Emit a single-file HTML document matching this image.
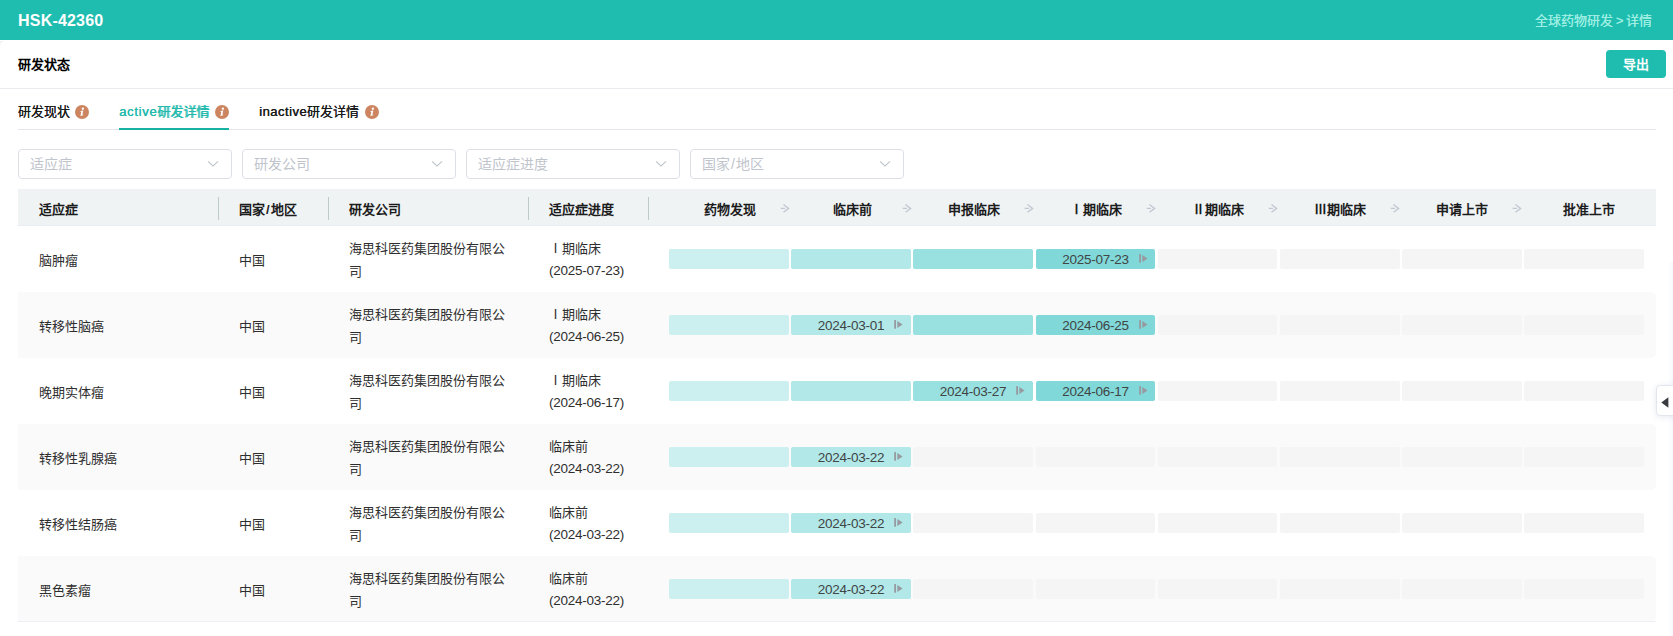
<!DOCTYPE html>
<html lang="zh-CN">
<head>
<meta charset="utf-8">
<title>HSK-42360</title>
<style>
*{box-sizing:border-box}
html,body{margin:0;padding:0}
body{width:1673px;height:636px;position:relative;overflow:hidden;background:#fff;font-family:"Liberation Sans",sans-serif;font-size:13px;color:#333}
.abs{position:absolute}
.top{left:0;top:0;width:1673px;height:40px;background:#1fbdaf}
.title{left:18px;top:1px;height:40px;line-height:40px;font-size:16px;font-weight:bold;color:#fff;white-space:nowrap;letter-spacing:.2px}
.crumb{right:21px;top:1px;height:40px;line-height:40px;font-size:13px;color:#9deee2;text-shadow:.2px 0 0 #9deee2;white-space:nowrap}
.crumb i{font-style:normal;letter-spacing:-1px;margin-right:1px}
.sec{left:18px;top:53px;height:24px;line-height:24px;font-size:13px;font-weight:bold;color:#000;white-space:nowrap}
.btn{left:1606px;top:50px;width:60px;height:28px;border-radius:4px;background:#1fbdaf;color:#fff;font-weight:bold;font-size:13px;line-height:28px;padding-top:1px;text-align:center}
.hr1{left:0;top:88px;width:1673px;height:1px;background:#e9ebef}
.corner{left:0;top:41px;width:4px;height:4px;background:radial-gradient(circle at 4px 4px,#fff 3.4px,#f1f1f1 4px)}
.tabline{left:18px;top:129px;width:1638px;height:1px;background:#e4e7ed}
.tab{top:100px;height:24px;line-height:24px;font-size:13px;font-weight:400;color:#1a1a1a;text-shadow:.4px 0 0 #1a1a1a;white-space:nowrap}
.lat{letter-spacing:.75px}
.sl{font-weight:inherit;margin:0 1px}
.d{font-size:13.5px;letter-spacing:-.26px;position:relative;top:-1px}
.tab.on{color:#1fbaad;text-shadow:.4px 0 0 #1fbaad}
.ink{left:119px;top:128px;width:110px;height:2px;background:#16b3a4}
.info{width:14px;height:14px;top:105px}
.sel{top:149px;width:214px;height:30px;border:1px solid #dcdfe6;border-radius:4px;background:#fff}
.sel span{position:absolute;left:11px;top:0;height:28px;line-height:28px;font-size:14px;color:#c0c4cc;white-space:nowrap}
.sel svg{position:absolute;left:188px;top:10px}
.thead{left:18px;top:189px;width:1638px;height:37px;background:#eff3f4;border-bottom:1px solid #e9ecf2}
.th{top:191px;height:37px;line-height:37px;font-weight:bold;color:#1c1c1c;font-size:13px;white-space:nowrap}
.sep{top:197px;width:1px;height:23px;background:#bccbc8}
.row{left:18px;width:1638px;height:66px}
.row.alt{background:#fafafa;border-radius:0 5px 5px 0}
.c{position:absolute;line-height:23px;font-size:13px;color:#2e2e2e;white-space:nowrap}
.c1{left:21px;top:23px}
.c2{left:221px;top:23px}
.c3{left:331px;top:11px;width:158px;white-space:normal}
.c4{left:531px;top:11px}
.bar{position:absolute;top:23px;height:20px;border-radius:2px;background:#f5f5f5;text-align:center;line-height:21px;font-size:13.5px;letter-spacing:-.26px;color:#404545}
.b1{background:#ccefef !important}
.b2{background:#b2e8e8 !important}
.b3{background:#99e0e0 !important}
.b4{background:#80d8d8 !important}
.bar svg{position:absolute;left:102.8px;top:5px}
.sth{top:191px;height:37px;line-height:37px;font-weight:bold;color:#1c1c1c;font-size:13px;text-align:center;white-space:nowrap}
.arr{top:204px}
.endline{left:18px;top:621px;width:1638px;height:1px;background:#ebeef5}
.side{left:1656px;top:385px;width:20px;height:31px;background:#fff;border:1px solid #e3e6ec;border-radius:4px 0 0 4px;box-shadow:0 1px 6px rgba(40,70,130,.12)}
.edge{left:1668px;top:262px;width:5px;height:374px;background:linear-gradient(90deg,rgba(120,150,220,0),rgba(120,150,220,.07))}
</style>
</head>
<body>
<div class="abs top"></div>
<div class="abs title">HSK-42360</div>
<div class="abs crumb">全球药物研发<i> &gt; </i>详情</div>
<div class="abs sec">研发状态</div>
<div class="abs btn">导出</div>
<div class="abs hr1"></div>
<div class="abs corner"></div>
<div class="abs tab" style="left:18px">研发现状</div>
<svg class="abs info" style="left:75px" viewBox="0 0 14 14"><circle cx="7" cy="7" r="7" fill="#cd8561"/><circle cx="7.85" cy="3.75" r="1.15" fill="#fff"/><path d="M5.5 6 L8.3 5.5 L7.35 9.7 L8.3 9.5 L8.15 10.3 L5.4 10.9 L6.35 6.7 L5.4 6.85 Z" fill="#fff"/></svg>
<div class="abs tab on" style="left:119px"><span class="lat" style="letter-spacing:.7px">active</span>研发详情</div>
<svg class="abs info" style="left:215px" viewBox="0 0 14 14"><circle cx="7" cy="7" r="7" fill="#cd8561"/><circle cx="7.85" cy="3.75" r="1.15" fill="#fff"/><path d="M5.5 6 L8.3 5.5 L7.35 9.7 L8.3 9.5 L8.15 10.3 L5.4 10.9 L6.35 6.7 L5.4 6.85 Z" fill="#fff"/></svg>
<div class="abs tab" style="left:259px"><span class="lat" style="letter-spacing:.5px">inactive</span>研发详情</div>
<svg class="abs info" style="left:365px" viewBox="0 0 14 14"><circle cx="7" cy="7" r="7" fill="#cd8561"/><circle cx="7.85" cy="3.75" r="1.15" fill="#fff"/><path d="M5.5 6 L8.3 5.5 L7.35 9.7 L8.3 9.5 L8.15 10.3 L5.4 10.9 L6.35 6.7 L5.4 6.85 Z" fill="#fff"/></svg>
<div class="abs tabline"></div>
<div class="abs ink"></div>
<div class="abs sel" style="left:18px"><span>适应症</span><svg width="12" height="8" viewBox="0 0 12 8"><path d="M1 1.3 L6 6 L11 1.3" fill="none" stroke="#c0c4cc" stroke-width="1.1"/></svg></div>
<div class="abs sel" style="left:242px"><span>研发公司</span><svg width="12" height="8" viewBox="0 0 12 8"><path d="M1 1.3 L6 6 L11 1.3" fill="none" stroke="#c0c4cc" stroke-width="1.1"/></svg></div>
<div class="abs sel" style="left:466px"><span>适应症进度</span><svg width="12" height="8" viewBox="0 0 12 8"><path d="M1 1.3 L6 6 L11 1.3" fill="none" stroke="#c0c4cc" stroke-width="1.1"/></svg></div>
<div class="abs sel" style="left:690px"><span>国家<b class="sl">/</b>地区</span><svg width="12" height="8" viewBox="0 0 12 8"><path d="M1 1.3 L6 6 L11 1.3" fill="none" stroke="#c0c4cc" stroke-width="1.1"/></svg></div>
<div class="abs thead"></div>
<div class="abs th" style="left:39px">适应症</div>
<div class="abs th" style="left:239px">国家<b class="sl">/</b>地区</div>
<div class="abs th" style="left:349px">研发公司</div>
<div class="abs th" style="left:549px">适应症进度</div>
<div class="abs sep" style="left:218px"></div>
<div class="abs sep" style="left:328px"></div>
<div class="abs sep" style="left:528px"></div>
<div class="abs sep" style="left:648px"></div>
<div class="abs sth" style="left:680.25px;width:100px">药物发现</div>
<svg class="abs arr" style="left:780.40px" width="10" height="9" viewBox="0 0 10 9"><path d="M0.7 4.4 H5 M3.5 0.5 L8.6 4.4 L3.5 8.3" fill="none" stroke="#c2c8d2" stroke-width="1.35"/></svg>
<div class="abs sth" style="left:802.15px;width:100px">临床前</div>
<svg class="abs arr" style="left:902.27px" width="10" height="9" viewBox="0 0 10 9"><path d="M0.7 4.4 H5 M3.5 0.5 L8.6 4.4 L3.5 8.3" fill="none" stroke="#c2c8d2" stroke-width="1.35"/></svg>
<div class="abs sth" style="left:924.05px;width:100px">申报临床</div>
<svg class="abs arr" style="left:1024.14px" width="10" height="9" viewBox="0 0 10 9"><path d="M0.7 4.4 H5 M3.5 0.5 L8.6 4.4 L3.5 8.3" fill="none" stroke="#c2c8d2" stroke-width="1.35"/></svg>
<div class="abs sth" style="left:1045.95px;width:100px">Ⅰ期临床</div>
<svg class="abs arr" style="left:1146.01px" width="10" height="9" viewBox="0 0 10 9"><path d="M0.7 4.4 H5 M3.5 0.5 L8.6 4.4 L3.5 8.3" fill="none" stroke="#c2c8d2" stroke-width="1.35"/></svg>
<div class="abs sth" style="left:1167.85px;width:100px">Ⅱ期临床</div>
<svg class="abs arr" style="left:1267.88px" width="10" height="9" viewBox="0 0 10 9"><path d="M0.7 4.4 H5 M3.5 0.5 L8.6 4.4 L3.5 8.3" fill="none" stroke="#c2c8d2" stroke-width="1.35"/></svg>
<div class="abs sth" style="left:1289.75px;width:100px">Ⅲ期临床</div>
<svg class="abs arr" style="left:1389.75px" width="10" height="9" viewBox="0 0 10 9"><path d="M0.7 4.4 H5 M3.5 0.5 L8.6 4.4 L3.5 8.3" fill="none" stroke="#c2c8d2" stroke-width="1.35"/></svg>
<div class="abs sth" style="left:1411.65px;width:100px">申请上市</div>
<svg class="abs arr" style="left:1511.62px" width="10" height="9" viewBox="0 0 10 9"><path d="M0.7 4.4 H5 M3.5 0.5 L8.6 4.4 L3.5 8.3" fill="none" stroke="#c2c8d2" stroke-width="1.35"/></svg>
<div class="abs sth" style="left:1539.00px;width:100px">批准上市</div>
<div class="abs row" style="top:226px">
<div class="c c1">脑肿瘤</div><div class="c c2">中国</div><div class="c c3">海思科医药集团股份有限公司</div><div class="c c4">Ⅰ期临床<br><span class="d">(2025-07-23)</span></div>
<div class="bar b1" style="left:651px;width:120px"></div>
<div class="bar b2" style="left:773px;width:120px"></div>
<div class="bar b3" style="left:895px;width:120px"></div>
<div class="bar b4" style="left:1018px;width:119px">2025-07-23<svg width="10" height="10" viewBox="0 0 10 10"><rect x="0.2" y="0.1" width="1.8" height="8.6" fill="#979aa0"/><path d="M3.3 0.9 L8.6 4.5 L3.3 8.1 Z" fill="#979aa0"/></svg></div>
<div class="bar" style="left:1140px;width:119px"></div>
<div class="bar" style="left:1262px;width:120px"></div>
<div class="bar" style="left:1384px;width:120px"></div>
<div class="bar" style="left:1506px;width:120px"></div>
</div>
<div class="abs row alt" style="top:292px">
<div class="c c1">转移性脑癌</div><div class="c c2">中国</div><div class="c c3">海思科医药集团股份有限公司</div><div class="c c4">Ⅰ期临床<br><span class="d">(2024-06-25)</span></div>
<div class="bar b1" style="left:651px;width:120px"></div>
<div class="bar b2" style="left:773px;width:120px">2024-03-01<svg width="10" height="10" viewBox="0 0 10 10"><rect x="0.2" y="0.1" width="1.8" height="8.6" fill="#979aa0"/><path d="M3.3 0.9 L8.6 4.5 L3.3 8.1 Z" fill="#979aa0"/></svg></div>
<div class="bar b3" style="left:895px;width:120px"></div>
<div class="bar b4" style="left:1018px;width:119px">2024-06-25<svg width="10" height="10" viewBox="0 0 10 10"><rect x="0.2" y="0.1" width="1.8" height="8.6" fill="#979aa0"/><path d="M3.3 0.9 L8.6 4.5 L3.3 8.1 Z" fill="#979aa0"/></svg></div>
<div class="bar" style="left:1140px;width:119px"></div>
<div class="bar" style="left:1262px;width:120px"></div>
<div class="bar" style="left:1384px;width:120px"></div>
<div class="bar" style="left:1506px;width:120px"></div>
</div>
<div class="abs row" style="top:358px">
<div class="c c1">晚期实体瘤</div><div class="c c2">中国</div><div class="c c3">海思科医药集团股份有限公司</div><div class="c c4">Ⅰ期临床<br><span class="d">(2024-06-17)</span></div>
<div class="bar b1" style="left:651px;width:120px"></div>
<div class="bar b2" style="left:773px;width:120px"></div>
<div class="bar b3" style="left:895px;width:120px">2024-03-27<svg width="10" height="10" viewBox="0 0 10 10"><rect x="0.2" y="0.1" width="1.8" height="8.6" fill="#979aa0"/><path d="M3.3 0.9 L8.6 4.5 L3.3 8.1 Z" fill="#979aa0"/></svg></div>
<div class="bar b4" style="left:1018px;width:119px">2024-06-17<svg width="10" height="10" viewBox="0 0 10 10"><rect x="0.2" y="0.1" width="1.8" height="8.6" fill="#979aa0"/><path d="M3.3 0.9 L8.6 4.5 L3.3 8.1 Z" fill="#979aa0"/></svg></div>
<div class="bar" style="left:1140px;width:119px"></div>
<div class="bar" style="left:1262px;width:120px"></div>
<div class="bar" style="left:1384px;width:120px"></div>
<div class="bar" style="left:1506px;width:120px"></div>
</div>
<div class="abs row alt" style="top:424px">
<div class="c c1">转移性乳腺癌</div><div class="c c2">中国</div><div class="c c3">海思科医药集团股份有限公司</div><div class="c c4">临床前<br><span class="d">(2024-03-22)</span></div>
<div class="bar b1" style="left:651px;width:120px"></div>
<div class="bar b2" style="left:773px;width:120px">2024-03-22<svg width="10" height="10" viewBox="0 0 10 10"><rect x="0.2" y="0.1" width="1.8" height="8.6" fill="#979aa0"/><path d="M3.3 0.9 L8.6 4.5 L3.3 8.1 Z" fill="#979aa0"/></svg></div>
<div class="bar" style="left:895px;width:120px"></div>
<div class="bar" style="left:1018px;width:119px"></div>
<div class="bar" style="left:1140px;width:119px"></div>
<div class="bar" style="left:1262px;width:120px"></div>
<div class="bar" style="left:1384px;width:120px"></div>
<div class="bar" style="left:1506px;width:120px"></div>
</div>
<div class="abs row" style="top:490px">
<div class="c c1">转移性结肠癌</div><div class="c c2">中国</div><div class="c c3">海思科医药集团股份有限公司</div><div class="c c4">临床前<br><span class="d">(2024-03-22)</span></div>
<div class="bar b1" style="left:651px;width:120px"></div>
<div class="bar b2" style="left:773px;width:120px">2024-03-22<svg width="10" height="10" viewBox="0 0 10 10"><rect x="0.2" y="0.1" width="1.8" height="8.6" fill="#979aa0"/><path d="M3.3 0.9 L8.6 4.5 L3.3 8.1 Z" fill="#979aa0"/></svg></div>
<div class="bar" style="left:895px;width:120px"></div>
<div class="bar" style="left:1018px;width:119px"></div>
<div class="bar" style="left:1140px;width:119px"></div>
<div class="bar" style="left:1262px;width:120px"></div>
<div class="bar" style="left:1384px;width:120px"></div>
<div class="bar" style="left:1506px;width:120px"></div>
</div>
<div class="abs row alt" style="top:556px">
<div class="c c1">黑色素瘤</div><div class="c c2">中国</div><div class="c c3">海思科医药集团股份有限公司</div><div class="c c4">临床前<br><span class="d">(2024-03-22)</span></div>
<div class="bar b1" style="left:651px;width:120px"></div>
<div class="bar b2" style="left:773px;width:120px">2024-03-22<svg width="10" height="10" viewBox="0 0 10 10"><rect x="0.2" y="0.1" width="1.8" height="8.6" fill="#979aa0"/><path d="M3.3 0.9 L8.6 4.5 L3.3 8.1 Z" fill="#979aa0"/></svg></div>
<div class="bar" style="left:895px;width:120px"></div>
<div class="bar" style="left:1018px;width:119px"></div>
<div class="bar" style="left:1140px;width:119px"></div>
<div class="bar" style="left:1262px;width:120px"></div>
<div class="bar" style="left:1384px;width:120px"></div>
<div class="bar" style="left:1506px;width:120px"></div>
</div>
<div class="abs endline"></div>
<div class="abs edge"></div>
<div class="abs side"><svg style="position:absolute;left:3.7px;top:10.5px" width="8" height="11" viewBox="0 0 8 11"><path d="M7.4 0.2 L0.3 5.5 L7.4 10.8 Z" fill="#383c40"/></svg></div>
</body>
</html>
